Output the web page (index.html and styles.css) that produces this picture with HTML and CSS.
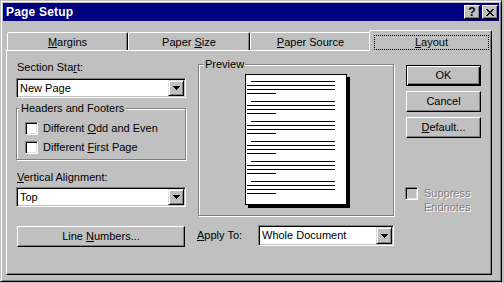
FILE: index.html
```html
<!DOCTYPE html>
<html>
<head>
<meta charset="utf-8">
<title>Page Setup</title>
<link rel="stylesheet" href="styles.css">
</head>
<body>
<div class="window">
  <div class="titlebar">
    <span class="title">Page Setup</span>
    <div class="tbtns">
      <span class="tbtn help">?</span>
      <span class="tbtn close">
        <svg width="8" height="7" viewBox="0 0 8 7" shape-rendering="crispEdges">
          <rect x="0" y="0" width="2" height="1"/><rect x="6" y="0" width="2" height="1"/>
          <rect x="1" y="1" width="2" height="1"/><rect x="5" y="1" width="2" height="1"/>
          <rect x="2" y="2" width="4" height="1"/>
          <rect x="3" y="3" width="2" height="1"/>
          <rect x="2" y="4" width="4" height="1"/>
          <rect x="1" y="5" width="2" height="1"/><rect x="5" y="5" width="2" height="1"/>
          <rect x="0" y="6" width="2" height="1"/><rect x="6" y="6" width="2" height="1"/>
        </svg>
      </span>
    </div>
  </div>
  <div class="content">
    <div class="tabs">
      <div class="tab t1"><span><u>M</u>argins</span></div>
      <div class="tab t2"><span>Paper <u>S</u>ize</span></div>
      <div class="tab t3"><span><u>P</u>aper Source</span></div>
      <div class="tab t4 selected"><span class="focus"><span><u>L</u>ayout</span></span></div>
    </div>
    <div class="panel">
      <div class="col left">
        <div class="lbl lbl-section">Section Sta<u>r</u>t:</div>
        <div class="combo combo-section">
          <span class="combo-text">New Page</span>
          <span class="drop"><svg width="7" height="4" viewBox="0 0 7 4" shape-rendering="crispEdges"><rect x="0" y="0" width="7" height="1"/><rect x="1" y="1" width="5" height="1"/><rect x="2" y="2" width="3" height="1"/><rect x="3" y="3" width="1" height="1"/></svg></span>
        </div>
        <fieldset class="group hf">
          <legend>Headers and Footers</legend>
          <div class="chk-row"><span class="chk"></span><span class="chk-label">Different <u>O</u>dd and Even</span></div>
          <div class="chk-row second"><span class="chk"></span><span class="chk-label">Different <u>F</u>irst Page</span></div>
        </fieldset>
        <div class="lbl lbl-valign"><u>V</u>ertical Alignment:</div>
        <div class="combo combo-valign">
          <span class="combo-text">Top</span>
          <span class="drop"><svg width="7" height="4" viewBox="0 0 7 4" shape-rendering="crispEdges"><rect x="0" y="0" width="7" height="1"/><rect x="1" y="1" width="5" height="1"/><rect x="2" y="2" width="3" height="1"/><rect x="3" y="3" width="1" height="1"/></svg></span>
        </div>
        <div class="btn btn-line"><span>Line <u>N</u>umbers...</span></div>
      </div>
      <div class="col mid">
        <fieldset class="group preview">
          <legend>Preview</legend>
          <div class="page-wrap">
            <div class="page">
              <div class="para"><i class="ln first"></i><i class="ln full"></i><i class="ln full"></i><i class="ln short"></i></div>
              <div class="para"><i class="ln first"></i><i class="ln full"></i><i class="ln full"></i><i class="ln short"></i></div>
              <div class="para"><i class="ln first"></i><i class="ln full"></i><i class="ln full"></i><i class="ln short"></i></div>
              <div class="para"><i class="ln first"></i><i class="ln full"></i><i class="ln full"></i><i class="ln short"></i></div>
              <div class="para"><i class="ln first"></i><i class="ln full"></i><i class="ln full"></i><i class="ln short"></i></div>
              <div class="para"><i class="ln first"></i><i class="ln full"></i><i class="ln full"></i><i class="ln short"></i></div>
            </div>
          </div>
        </fieldset>
        <div class="apply-row">
          <span class="apply-lbl"><u>A</u>pply To:</span>
          <div class="combo combo-apply">
            <span class="combo-text">Whole Document</span>
            <span class="drop"><svg width="7" height="4" viewBox="0 0 7 4" shape-rendering="crispEdges"><rect x="0" y="0" width="7" height="1"/><rect x="1" y="1" width="5" height="1"/><rect x="2" y="2" width="3" height="1"/><rect x="3" y="3" width="1" height="1"/></svg></span>
          </div>
        </div>
      </div>
      <div class="col right">
        <div class="btn btn-ok default"><span>OK</span></div>
        <div class="btn btn-side"><span>Cancel</span></div>
        <div class="btn btn-side"><span><u>D</u>efault...</span></div>
        <div class="suppress">
          <span class="chk disabled"></span>
          <span class="suppress-label">Suppress<br>Endnotes</span>
        </div>
      </div>
    </div>
  </div>
</div>
</body>
</html>
```

FILE: styles.css
```css
* { box-sizing: border-box; }
html, body { margin: 0; padding: 0; }
body {
  width: 504px;
  height: 283px;
  overflow: hidden;
  background: #c0c0c0;
  font-family: "Liberation Sans", Arial, sans-serif;
  font-size: 11px;
  line-height: 13px;
  color: #000;
}
u { text-decoration: underline; text-underline-offset: 1px; }

.window {
  width: 502px;
  height: 282px;
  background: #c0c0c0;
  border: 1px solid;
  border-color: #c0c0c0 #000 #000 #c0c0c0;
  box-shadow: inset 1px 1px 0 #fff, inset -1px -1px 0 #808080;
  padding: 2px;
}

.titlebar {
  height: 18px;
  background: #000080;
  color: #fff;
  display: flex;
  align-items: center;
  justify-content: space-between;
  padding: 0 1px 0 3px;
}
.title { font-weight: bold; font-size: 12px; line-height: 18px; letter-spacing: 0.2px; }
.tbtns { display: flex; gap: 2px; }
.tbtn {
  width: 16px;
  height: 14px;
  background: #c0c0c0;
  border: 1px solid;
  border-color: #fff #000 #000 #fff;
  box-shadow: inset -1px -1px 0 #808080;
  display: flex;
  align-items: center;
  justify-content: center;
  color: #000;
}
.help { font-weight: bold; font-size: 12px; line-height: 12px; }
.close svg { fill: #000; display: block; }

.content { padding: 9px 0 0 3px; }

.tabs {
  display: flex;
  align-items: flex-end;
  height: 20px;
  padding-left: 1px;
  position: relative;
  z-index: 1;
}
.tab {
  height: 18px;
  background: #c0c0c0;
  border: 1px solid;
  border-bottom: 0;
  border-color: #fff #000 transparent #fff;
  border-radius: 2px 2px 0 0;
  box-shadow: inset -1px 0 0 #808080;
  display: flex;
  align-items: center;
  justify-content: center;
  padding-top: 1px;
}
.t1 { width: 121px; }
.t2 { width: 122px; }
.t3 { width: 121px; }
.t4.selected {
  width: 123px;
  height: 21px;
  margin: 0 -2px -1px -2px;
  align-items: stretch;
  padding: 4px 2px 1px 4px;
}
.focus {
  flex: 1;
  border: 1px dotted #000;
  display: flex;
  align-items: center;
  justify-content: center;
}

.panel {
  width: 486px;
  height: 225px;
  border: 1px solid;
  border-color: #fff #000 #000 #fff;
  box-shadow: inset -1px -1px 0 #808080;
  display: flex;
  align-items: flex-start;
}

.col { display: flex; flex-direction: column; align-items: flex-start; }
.left { margin-left: 9px; width: 170px; }
.mid { margin-left: 11px; width: 197px; }
.right { margin-left: 11px; width: 77px; }

.lbl { padding-left: 1px; }
.lbl-section { margin-top: 10px; }
.lbl-valign { margin-top: 11px; }

.combo {
  height: 20px;
  background: #fff;
  border: 1px solid;
  border-color: #808080 #fff #fff #808080;
  box-shadow: inset 1px 1px 0 #000, inset -1px -1px 0 #c0c0c0;
  padding: 1px;
  display: flex;
  align-items: stretch;
}
.combo-section { width: 170px; margin-top: 4px; }
.combo-valign { width: 170px; margin-top: 3px; }
.combo-text { flex: 1; padding-left: 2px; display: flex; align-items: center; }
.drop {
  width: 16px;
  background: #c0c0c0;
  border: 1px solid;
  border-color: #dfdfdf #000 #000 #dfdfdf;
  box-shadow: inset 1px 1px 0 #fff, inset -1px -1px 0 #808080;
  display: flex;
  align-items: center;
  justify-content: center;
}
.drop svg { display: block; fill: #000; }

.group {
  margin: 0;
  border: 1px solid #808080;
  box-shadow: inset 1px 1px 0 #fff, 1px 1px 0 #fff;
  min-width: 0;
}
.group legend { padding: 0 2px; line-height: 13px; background: #c0c0c0; }

.hf { width: 170px; margin-top: 4px; padding: 7px 0 5px 2px; }
.chk-row { display: flex; align-items: center; height: 13px; margin-left: 6px; }
.chk-row.second { margin-top: 6px; }
.chk {
  width: 13px;
  height: 13px;
  flex: none;
  background: #fff;
  border: 1px solid;
  border-color: #808080 #fff #fff #808080;
  box-shadow: inset 1px 1px 0 #000, inset -1px -1px 0 #dfdfdf;
}
.chk.disabled { background: #c0c0c0; }
.chk-label { margin-left: 5px; }

.btn {
  height: 21px;
  background: #c0c0c0;
  border: 1px solid;
  border-color: #fff #000 #000 #fff;
  box-shadow: inset -1px -1px 0 #808080;
  display: flex;
  align-items: center;
  justify-content: center;
}
.btn-line { width: 168px; margin: 19px 0 0 1px; }
.btn.default {
  border-color: #000;
  box-shadow: inset 1px 1px 0 #fff, inset -1px -1px 0 #000, inset -2px -2px 0 #808080;
}
.btn-ok { width: 75px; margin: 14px 0 0 1px; }
.btn-side { width: 75px; margin: 5px 0 0 1px; }

.preview { width: 196px; margin: 7px 0 0 1px; padding: 3px 5px 10px 5px; }
.preview legend { padding: 0 1px; line-height: 13px; }
.page-wrap { display: flex; justify-content: center; }
.page {
  width: 102px;
  height: 131px;
  background: #fff;
  border: 1px solid #000;
  box-shadow: 3px 3px 0 #000;
  padding-top: 6px;
}
.para { height: 20px; display: flex; flex-direction: column; gap: 3px; }
.ln { display: block; height: 1px; background: #000; }
.ln.first { margin-left: 5px; width: 84px; }
.ln.full { margin-left: 1px; width: 88px; }
.ln.short { margin-left: 1px; width: 29px; }

.apply-row { display: flex; align-items: center; margin-top: 9px; width: 197px; }
.apply-lbl { width: 61px; }
.combo-apply { width: 136px; height: 21px; }

.suppress { display: flex; align-items: flex-start; margin-top: 49px; }
.suppress-label {
  margin-left: 6px;
  margin-top: -1px;
  line-height: 14px;
  color: #808080;
  text-shadow: 1px 1px 0 #fff;
}
```
